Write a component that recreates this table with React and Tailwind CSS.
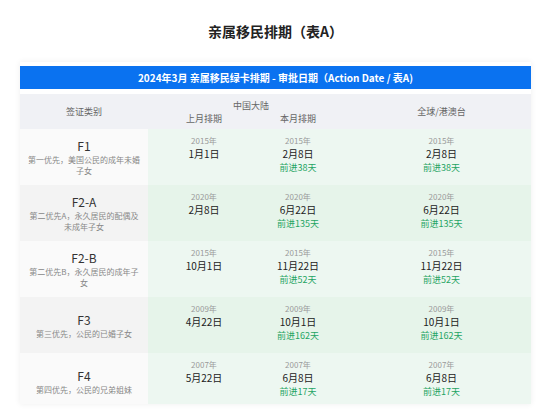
import React from "react";

const rows = [
  {
    code: "F1",
    desc: "第一优先，美国公民的成年未婚子女",
    prev: { year: "2015年", date: "1月1日" },
    cn: { year: "2015年", date: "2月8日", move: "前进38天" },
    row: { year: "2015年", date: "2月8日", move: "前进38天" },
  },
  {
    code: "F2-A",
    desc: "第二优先A，永久居民的配偶及未成年子女",
    prev: { year: "2020年", date: "2月8日" },
    cn: { year: "2020年", date: "6月22日", move: "前进135天" },
    row: { year: "2020年", date: "6月22日", move: "前进135天" },
  },
  {
    code: "F2-B",
    desc: "第二优先B，永久居民的成年子女",
    prev: { year: "2015年", date: "10月1日" },
    cn: { year: "2015年", date: "11月22日", move: "前进52天" },
    row: { year: "2015年", date: "11月22日", move: "前进52天" },
  },
  {
    code: "F3",
    desc: "第三优先，公民的已婚子女",
    prev: { year: "2009年", date: "4月22日" },
    cn: { year: "2009年", date: "10月1日", move: "前进162天" },
    row: { year: "2009年", date: "10月1日", move: "前进162天" },
  },
  {
    code: "F4",
    desc: "第四优先，公民的兄弟姐妹",
    prev: { year: "2007年", date: "5月22日" },
    cn: { year: "2007年", date: "6月8日", move: "前进17天" },
    row: { year: "2007年", date: "6月8日", move: "前进17天" },
  },
];

function DateCell({ cell, className = "" }) {
  return (
    <div className={`flex flex-col items-center pt-[6px] ${className}`}>
      <span className="text-[8px] leading-[12px] text-[#9a9a9a]">{cell.year}</span>
      <span className="text-[10px] leading-[14px] text-[#222]">{cell.date}</span>
      {cell.move && (
        <span className="mt-px text-[9px] leading-[12px] text-[#1fa463]">{cell.move}</span>
      )}
    </div>
  );
}

export default function App() {
  return (
    <div className="min-h-[418px] bg-white font-['Noto_Sans_CJK_SC',sans-serif]">
      <div className="flex h-[62px] items-center justify-center">
        <h1 className="text-[14px] font-bold text-[#222]">亲属移民排期（表A）</h1>
      </div>

      <div className="mx-[20px] h-[342px] overflow-hidden bg-white pt-1 shadow-[0_0_6px_rgba(0,0,0,0.07)]">
        <div className="flex h-[23px] items-center justify-center bg-[#0a72f0] text-[10px] font-semibold text-white">
          2024年3月 亲属移民绿卡排期 - 审批日期（Action Date / 表A)
        </div>

        <div className="mt-[5px] grid h-[35px] grid-cols-[128px_112px_76px_1fr] bg-[#f0f1f5] text-[9px] text-[#666]">
          <div className="flex items-center justify-center">签证类别</div>
          <div className="col-span-2 flex flex-col">
            <div className="flex h-[18px] items-end justify-center pl-[18px]">中国大陆</div>
            <div className="grid flex-1 grid-cols-[112px_76px]">
              <div className="flex items-start justify-center">上月排期</div>
              <div className="flex items-start justify-center">本月排期</div>
            </div>
          </div>
          <div className="flex items-center justify-center pl-4">全球/港澳台</div>
        </div>

        {rows.map((r, i) => {
          const even = i % 2 === 1;
          return (
            <div
              key={r.code}
              className={`grid h-[56px] grid-cols-[128px_112px_76px_1fr] ${
                even ? "bg-[#e6f4ea]" : "bg-[#edf7f1]"
              }`}
            >
              <div
                className={`flex flex-col items-center justify-center px-2 text-center ${
                  even ? "bg-[#f3f3f3]" : "bg-[#fafafa]"
                }`}
              >
                <span className="text-[12px] leading-[16px] text-[#333]">{r.code}</span>
                <span className="text-[8px] leading-[11px] text-[#888]">{r.desc}</span>
              </div>
              <DateCell cell={r.prev} />
              <DateCell cell={r.cn} />
              <DateCell cell={r.row} className="pl-4" />
            </div>
          );
        })}
      </div>
    </div>
  );
}
